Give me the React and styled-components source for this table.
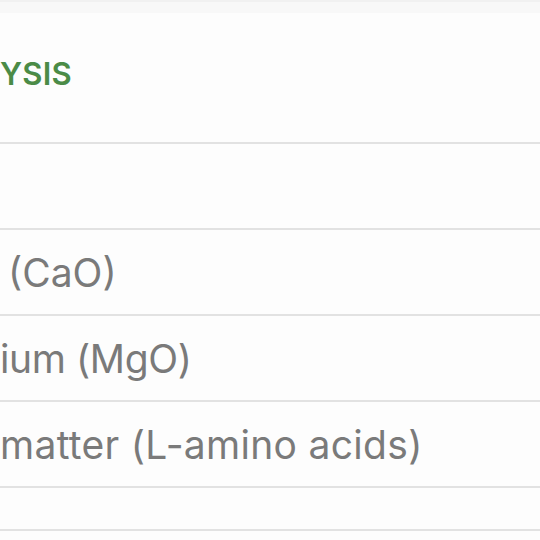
import React from 'react'
import styled, { createGlobalStyle } from 'styled-components'

const GlobalStyle = createGlobalStyle`
  html, body {
    margin: 0;
    padding: 0;
    background: #fdfdfd;
  }
  body {
    font-family: Inter, "Noto Sans", sans-serif;
    -webkit-font-smoothing: antialiased;
  }
`

const Viewport = styled.div`
  width: 540px;
  height: 540px;
  overflow: hidden;
  background: #fdfdfd;
`

const TopEdge = styled.div`
  height: 11px;
  background: #f8f8f8;
  border-top: 2px solid #f1f1f1;
`

const Panel = styled.section`
  width: 540px;
`

const Header = styled.h2`
  margin: 0;
  height: 131px;
  box-sizing: border-box;
  display: flex;
  align-items: center;
  padding-bottom: 8px;
  font-size: 31px;
  font-weight: 600;
  letter-spacing: 0.2px;
  color: #4b8b47;
  border-bottom: 2px solid #e2e2e2;
`

const Row = styled.div`
  display: flex;
  align-items: center;
  height: ${props => props.height || 86}px;
  box-sizing: border-box;
  border-bottom: 2px solid #e2e2e2;
`

const Label = styled.span`
  padding-left: ${props => props.indent || 0}px;
  font-size: 39px;
  font-weight: 400;
  letter-spacing: ${props => props.spacing || 0}px;
  color: #7a7a7a;
  white-space: nowrap;
`

const rows = [
  { label: '' },
  { label: '(CaO)', indent: 8 },
  { label: 'ium (MgO)', indent: 0, spacing: -0.4 },
  { label: 'matter (L-amino acids)', indent: 0, spacing: 0.3 },
  { label: '', height: 43 },
]

function App() {
  return (
    <Viewport>
      <GlobalStyle />
      <TopEdge />
      <Panel>
        <Header>YSIS</Header>
        {rows.map((row, i) => (
          <Row key={i} height={row.height}>
            <Label indent={row.indent} spacing={row.spacing}>{row.label}</Label>
          </Row>
        ))}
      </Panel>
    </Viewport>
  )
}

export default App
